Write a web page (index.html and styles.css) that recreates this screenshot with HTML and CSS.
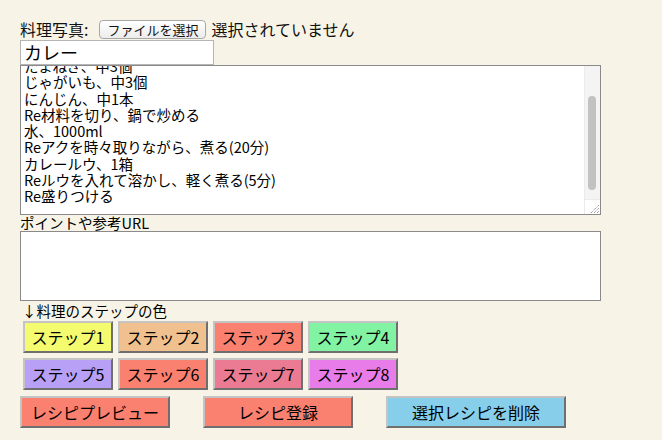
FILE: index.html
```html
<!DOCTYPE html>
<html lang="ja">
<head>
<meta charset="utf-8">
<link rel="stylesheet" href="styles.css">
</head>
<body>
<div class="page">
  <div class="photo-row">
    <span class="label-lg">料理写真:</span>
    <span class="file-btn">ファイルを選択</span>
    <span class="label-lg">選択されていません</span>
  </div>
  <div class="title-input">カレー</div>
  <div class="ta ta-main">
    <div class="ta-text">たまねぎ、中3個
じゃがいも、中3個
にんじん、中1本
Re材料を切り、鍋で炒める
水、1000ml
Reアクを時々取りながら、煮る(20分)
カレールウ、1箱
Reルウを入れて溶かし、軽く煮る(5分)
Re盛りつける</div>
    <div class="scrollbar"><div class="thumb"></div></div>
    <div class="corner">
      <svg width="11" height="11" viewBox="0 0 11 11"><path d="M2 10 L10 2 M5 10 L10 5 M8 10 L10 8" stroke="#777" stroke-width="1" stroke-dasharray="1 1" fill="none"/></svg>
    </div>
  </div>
  <div class="label-sm">ポイントや参考URL</div>
  <div class="ta ta-url"></div>
  <div class="label-sm steps-label">↓料理のステップの色</div>
  <div class="steps">
    <div class="step-row">
      <span class="btn step s1">ステップ1</span>
      <span class="btn step s2">ステップ2</span>
      <span class="btn step s3">ステップ3</span>
      <span class="btn step s4">ステップ4</span>
    </div>
    <div class="step-row">
      <span class="btn step s5">ステップ5</span>
      <span class="btn step s6">ステップ6</span>
      <span class="btn step s7">ステップ7</span>
      <span class="btn step s8">ステップ8</span>
    </div>
  </div>
  <div class="actions">
    <span class="btn act preview">レシピプレビュー</span>
    <span class="btn act register">レシピ登録</span>
    <span class="btn act delete">選択レシピを削除</span>
  </div>
</div>
</body>
</html>
```

FILE: styles.css
```css
html, body {
  margin: 0;
  padding: 0;
  background: #f7f4e7;
}
body {
  font-family: "Noto Sans CJK JP", "Noto Sans", sans-serif;
  color: #111;
}
.page {
  padding: 18px 0 0 20px;
  display: flex;
  flex-direction: column;
  align-items: flex-start;
}
.photo-row {
  display: flex;
  align-items: center;
  height: 22px;
  gap: 4px;
}
.label-lg {
  font-size: 16px;
  line-height: 22px;
}
.file-btn {
  display: inline-flex;
  align-items: center;
  justify-content: center;
  box-sizing: border-box;
  width: 107px;
  height: 19px;
  font-size: 13px;
  border: 1px solid #a8a8a8;
  border-radius: 4px;
  background: linear-gradient(#ffffff, #ececec);
  margin-left: 7px;
  margin-right: 1px;
}
.title-input {
  box-sizing: border-box;
  width: 194px;
  height: 25px;
  border: 1px solid #b5b5b5;
  background: #fff;
  font-size: 18px;
  line-height: 22px;
  padding: 0 3px;
  color: #000;
}
.ta {
  box-sizing: border-box;
  width: 581px;
  border: 1px solid #8a8a8a;
  background: #fff;
}
.ta-main {
  height: 150px;
  position: relative;
  overflow: hidden;
}
.ta-text {
  white-space: pre;
  font-size: 14.5px;
  line-height: 16.3px;
  padding-left: 3px;
  margin-top: -8px;
  color: #000;
}
.scrollbar {
  position: absolute;
  top: 0;
  right: 0;
  width: 15px;
  height: 134px;
  background: #f4f4f4;
  border-left: 1px solid #ebebeb;
}
.thumb {
  position: absolute;
  left: 3px;
  top: 30px;
  width: 8px;
  height: 94px;
  border-radius: 4px;
  background: #c2c2c2;
}
.corner {
  position: absolute;
  right: 0;
  bottom: 0;
  width: 15px;
  height: 14px;
  border-left: 1px solid #ebebeb;
  border-top: 1px solid #ebebeb;
  display: flex;
  align-items: flex-end;
  justify-content: flex-end;
}
.label-sm {
  font-size: 14.5px;
  line-height: 16px;
  color: #000;
}
.ta-url {
  height: 70px;
}
.steps-label {
  margin-top: 1px;
  height: 18px;
  line-height: 17px;
  padding-left: 2px;
}
.steps {
  display: flex;
  flex-direction: column;
  gap: 5px;
  padding-left: 3px;
  margin-top: 1px;
}
.step-row {
  display: flex;
  gap: 5px;
}
.btn {
  box-sizing: border-box;
  display: inline-flex;
  align-items: center;
  justify-content: center;
  height: 32px;
  border: 2px solid;
  border-color: #c4c4c4 #6f6f6f #6f6f6f #c4c4c4;
  font-size: 16px;
  color: #000;
}
.step { width: 90px; }
.s1 { background: #f5fb6e; }
.s2 { background: #f0c08e; }
.s3 { background: #fa8070; }
.s4 { background: #82f3a3; }
.s5 { background: #b8a0f6; }
.s6 { background: #fa8070; }
.s7 { background: #ea7b92; }
.s8 { background: #e87ce8; }
.actions {
  display: flex;
  gap: 33px;
  margin-top: 6px;
}
.act { width: 150px; }
.preview { background: #fa8070; }
.register { background: #fa8070; }
.delete { background: #87ceeb; width: 180px; }
```
